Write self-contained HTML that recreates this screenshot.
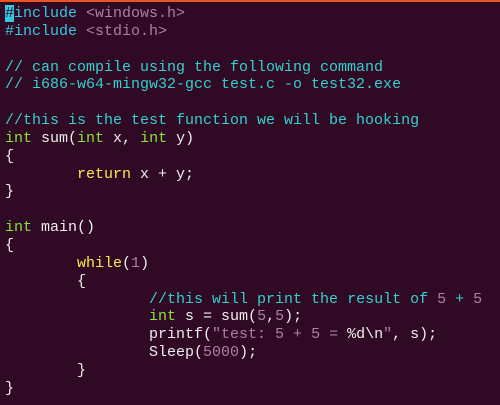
<!DOCTYPE html>
<html><head><style>
html,body{margin:0;padding:0;width:500px;height:405px;overflow:hidden;background:#300a24;}
.bar{position:absolute;left:0;top:0;width:500px;height:2px;background:#e95420;}
pre{position:absolute;left:5px;top:5px;margin:0;font-family:"Liberation Mono",monospace;font-size:15px;line-height:17.85px;color:#eeeeec;tab-size:8;}
.p{color:#34c8e2}.c{color:#34d0d0}.s{color:#ad7fa8}.t{color:#8ae234}.k{color:#fce94f}
.cur{background:#34c8e2;color:#300a24}
</style></head><body><div class="bar"></div>
<pre><span class="cur">#</span><span class="p">include</span> <span class="s">&lt;windows.h&gt;</span>
<span class="p">#include</span> <span class="s">&lt;stdio.h&gt;</span>

<span class="c">// can compile using the following command</span>
<span class="c">// i686-w64-mingw32-gcc test.c -o test32.exe</span>

<span class="c">//this is the test function we will be hooking</span>
<span class="t">int</span> sum(<span class="t">int</span> x, <span class="t">int</span> y)
{
	<span class="k">return</span> x + y;
}

<span class="t">int</span> main()
{
	<span class="k">while</span>(<span class="s">1</span>)
	{
		<span class="c">//this will print the result of </span><span class="s">5</span><span class="c"> + </span><span class="s">5</span>
		<span class="t">int</span> s = sum(<span class="s">5</span>,<span class="s">5</span>);
		printf(<span class="s">"test: 5 + 5 = </span>%d\n<span class="s">"</span>, s);
		Sleep(<span class="s">5000</span>);
	}
}</pre>
</body></html>
